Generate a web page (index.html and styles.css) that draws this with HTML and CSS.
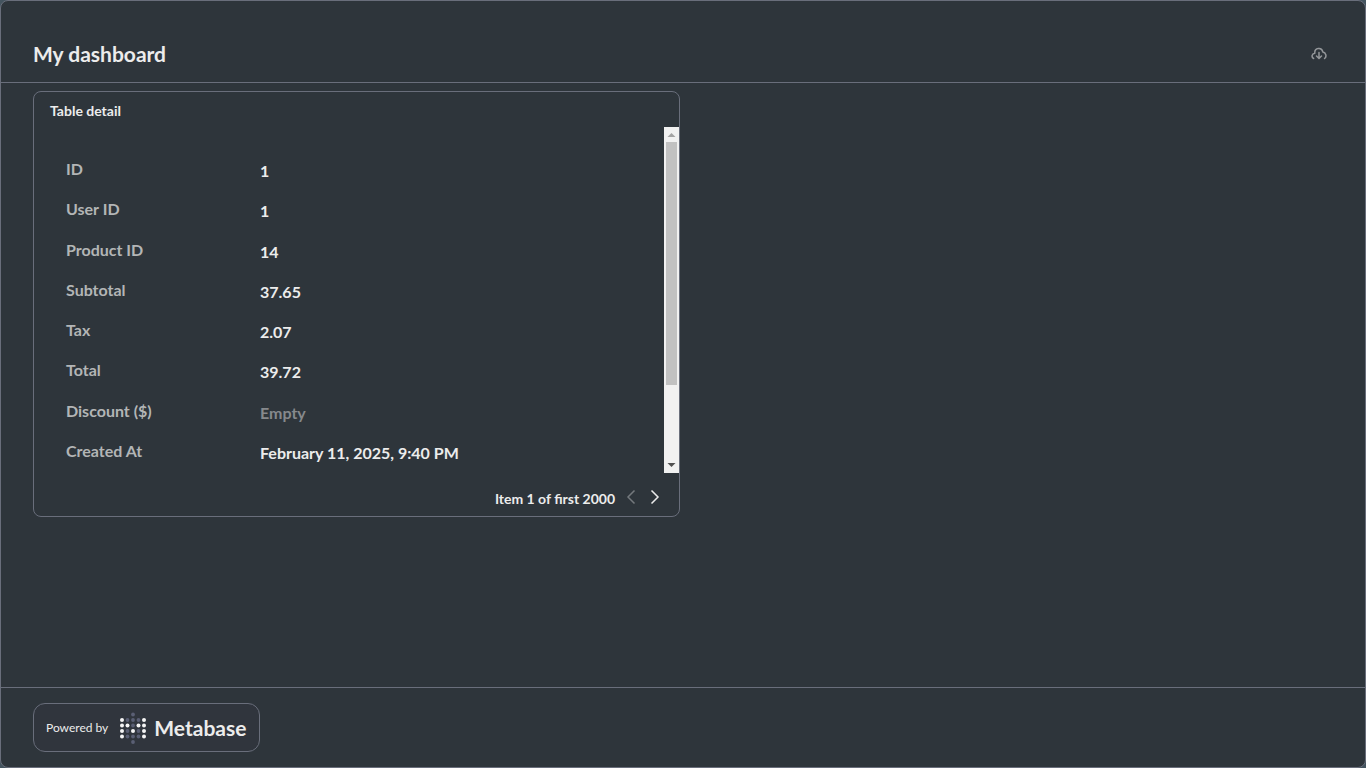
FILE: index.html
```html
<!DOCTYPE html>
<html lang="en">
<head>
<meta charset="utf-8">
<meta name="viewport" content="width=device-width, initial-scale=1">
<title>My dashboard</title>
<link rel="stylesheet" href="styles.css">
</head>
<body>
<div class="frame">
  <header class="header">
    <h1 class="title">My dashboard</h1>
    <button class="icon-button" type="button" aria-label="Download as PDF">
      <svg width="16" height="16" viewBox="0 0 16 16" fill="none" stroke="currentColor" stroke-width="1.5" stroke-linecap="round" stroke-linejoin="round">
        <path d="M2.600 12.500C.200 11.200 .600 7.700 3.800 7.300C3.300 1.600 10.800.900 11.800 5.900C15 6.500 16 10.600 13.600 12.500"/>
        <path d="M8 6.500V12.300M5.500 10L8 12.500L10.500 10"/>
      </svg>
    </button>
  </header>

  <main class="content">
    <section class="card">
      <h2 class="card-title">Table detail</h2>
      <div class="viewport">
        <div class="scroller" tabindex="0">
          <table class="detail">
            <tbody>
              <tr><th scope="row">ID</th><td>1</td></tr>
              <tr><th scope="row">User ID</th><td>1</td></tr>
              <tr><th scope="row">Product ID</th><td>14</td></tr>
              <tr><th scope="row">Subtotal</th><td>37.65</td></tr>
              <tr><th scope="row">Tax</th><td>2.07</td></tr>
              <tr><th scope="row">Total</th><td>39.72</td></tr>
              <tr><th scope="row">Discount ($)</th><td class="empty">Empty</td></tr>
              <tr><th scope="row">Created At</th><td>February 11, 2025, 9:40 PM</td></tr>
            </tbody>
          </table>
        </div>
        <div class="scrollbar" aria-hidden="true">
          <svg width="15" height="15" viewBox="0 0 15 15"><path d="M3.500 10L7.500 6L11.500 10Z" fill="#a3a3a3"/></svg>
          <div class="track"><div class="thumb"></div></div>
          <svg width="15" height="15" viewBox="0 0 15 15"><path d="M3.500 5L7.500 9L11.500 5Z" fill="#505050"/></svg>
        </div>
      </div>
      <div class="pager">
        <span class="pager-label">Item 1 of first 2000</span>
        <button class="pager-button" type="button" aria-label="Previous row" disabled>
          <svg width="16" height="16" viewBox="0 0 16 16" fill="none" stroke="currentColor" stroke-width="1.5"><path d="M11.500 1.500L5 8L11.500 14.500"/></svg>
        </button>
        <button class="pager-button" type="button" aria-label="Next row">
          <svg width="16" height="16" viewBox="0 0 16 16" fill="none" stroke="currentColor" stroke-width="1.5"><path d="M4.500 1.500L11 8L4.500 14.500"/></svg>
        </button>
      </div>
    </section>
  </main>

  <footer class="footer">
    <a class="badge" href="#">
      <span class="badge-text">Powered by</span>
      <svg class="logo" width="28" height="32" viewBox="0 0 28 32">
        <g fill="#5a5f74">
          <circle cx="14" cy="2.500" r="1.900"/>
          <circle cx="8.500" cy="8" r="1.900"/><circle cx="14" cy="8" r="1.900"/><circle cx="19.500" cy="8" r="1.900"/>
          <circle cx="14" cy="13.500" r="1.900"/>
          <circle cx="8.500" cy="19" r="1.900"/><circle cx="19.500" cy="19" r="1.900"/>
          <circle cx="8.500" cy="24.500" r="1.900"/><circle cx="14" cy="24.500" r="1.900"/><circle cx="19.500" cy="24.500" r="1.900"/>
          <circle cx="14" cy="30" r="1.900"/>
        </g>
        <g fill="#f4f4f4">
          <circle cx="3" cy="8" r="2"/><circle cx="25" cy="8" r="2"/>
          <circle cx="3" cy="13.500" r="2"/><circle cx="8.500" cy="13.500" r="2"/><circle cx="19.500" cy="13.500" r="2"/><circle cx="25" cy="13.500" r="2"/>
          <circle cx="3" cy="19" r="2"/><circle cx="14" cy="19" r="2"/><circle cx="25" cy="19" r="2"/>
          <circle cx="3" cy="24.500" r="2"/><circle cx="25" cy="24.500" r="2"/>
        </g>
      </svg>
      <span class="brand">Metabase</span>
    </a>
  </footer>
</div>
</body>
</html>
```
FILE: styles.css
```css
* {
  box-sizing: border-box;
}

body {
  margin: 0;
  background: #44545f;
  color: #ececec;
  font-family: Lato, "Open Sans", sans-serif;
  font-size: 16px;
  font-weight: 700;
}

button {
  padding: 0;
  border: 0;
  background: none;
  color: inherit;
  font: inherit;
  cursor: pointer;
}

svg {
  display: block;
}

.frame {
  display: flex;
  flex-direction: column;
  min-height: 100vh;
  border: 1px solid #696e7b;
  border-radius: 8px;
  background: #2e353b;
}

.header {
  display: flex;
  align-items: center;
  justify-content: space-between;
  padding: 39px 38px 15px 32px;
  border-bottom: 1px solid #696e7b;
}

.title {
  margin: 0;
  font-size: 21px;
  line-height: 27px;
}

.icon-button {
  color: #94979a;
}

.content {
  flex: 1;
  padding: 8px 32px;
}

.card {
  width: calc(50% - 3px);
  border: 1px solid #696e7b;
  border-radius: 8px;
}

.card-title {
  margin: 0;
  padding: 10px 16px 8px;
  font-size: 14px;
  line-height: 17px;
}

.viewport {
  display: flex;
  height: 346px;
}

.scroller {
  flex: 1;
  overflow-y: auto;
  scrollbar-width: none;
}

.scrollbar {
  display: flex;
  flex-direction: column;
  width: 15px;
  background: #f1f1f1;
}

.track {
  flex: 1;
  padding: 0 2px;
}

.thumb {
  height: 77%;
  background: #c1c1c1;
}

.detail {
  width: 100%;
  height: 322px;
  margin: 22px 0 104px;
  border-collapse: collapse;
  table-layout: fixed;
}

.detail th,
.detail td {
  line-height: 20px;
  text-align: left;
  vertical-align: top;
}

.detail th {
  width: 226px;
  padding: 10px 0 8px 32px;
  color: #b3b5b6;
}

.detail td {
  padding: 12px 0 8px;
}

.detail .empty {
  color: #86898c;
}

.pager {
  display: flex;
  align-items: center;
  justify-content: flex-end;
  gap: 8px;
  padding: 14px 16px 9px;
}

.pager-label {
  padding-top: 3px;
  font-size: 14px;
  line-height: 17px;
}

.pager-button:disabled {
  color: #74797d;
  cursor: default;
}

.footer {
  display: flex;
  padding: 15px 32px;
  border-top: 1px solid #696e7b;
}

.badge {
  display: flex;
  align-items: center;
  height: 49px;
  padding: 0 13px 0 12px;
  border: 1px solid #696e7b;
  border-radius: 12px;
  background: #30353d;
  color: inherit;
  text-decoration: none;
}

.badge-text {
  font-size: 12px;
  font-weight: 400;
}

.logo {
  margin: 0 7px 0 11px;
}

.brand {
  font-size: 21px;
  line-height: 28px;
}
```
